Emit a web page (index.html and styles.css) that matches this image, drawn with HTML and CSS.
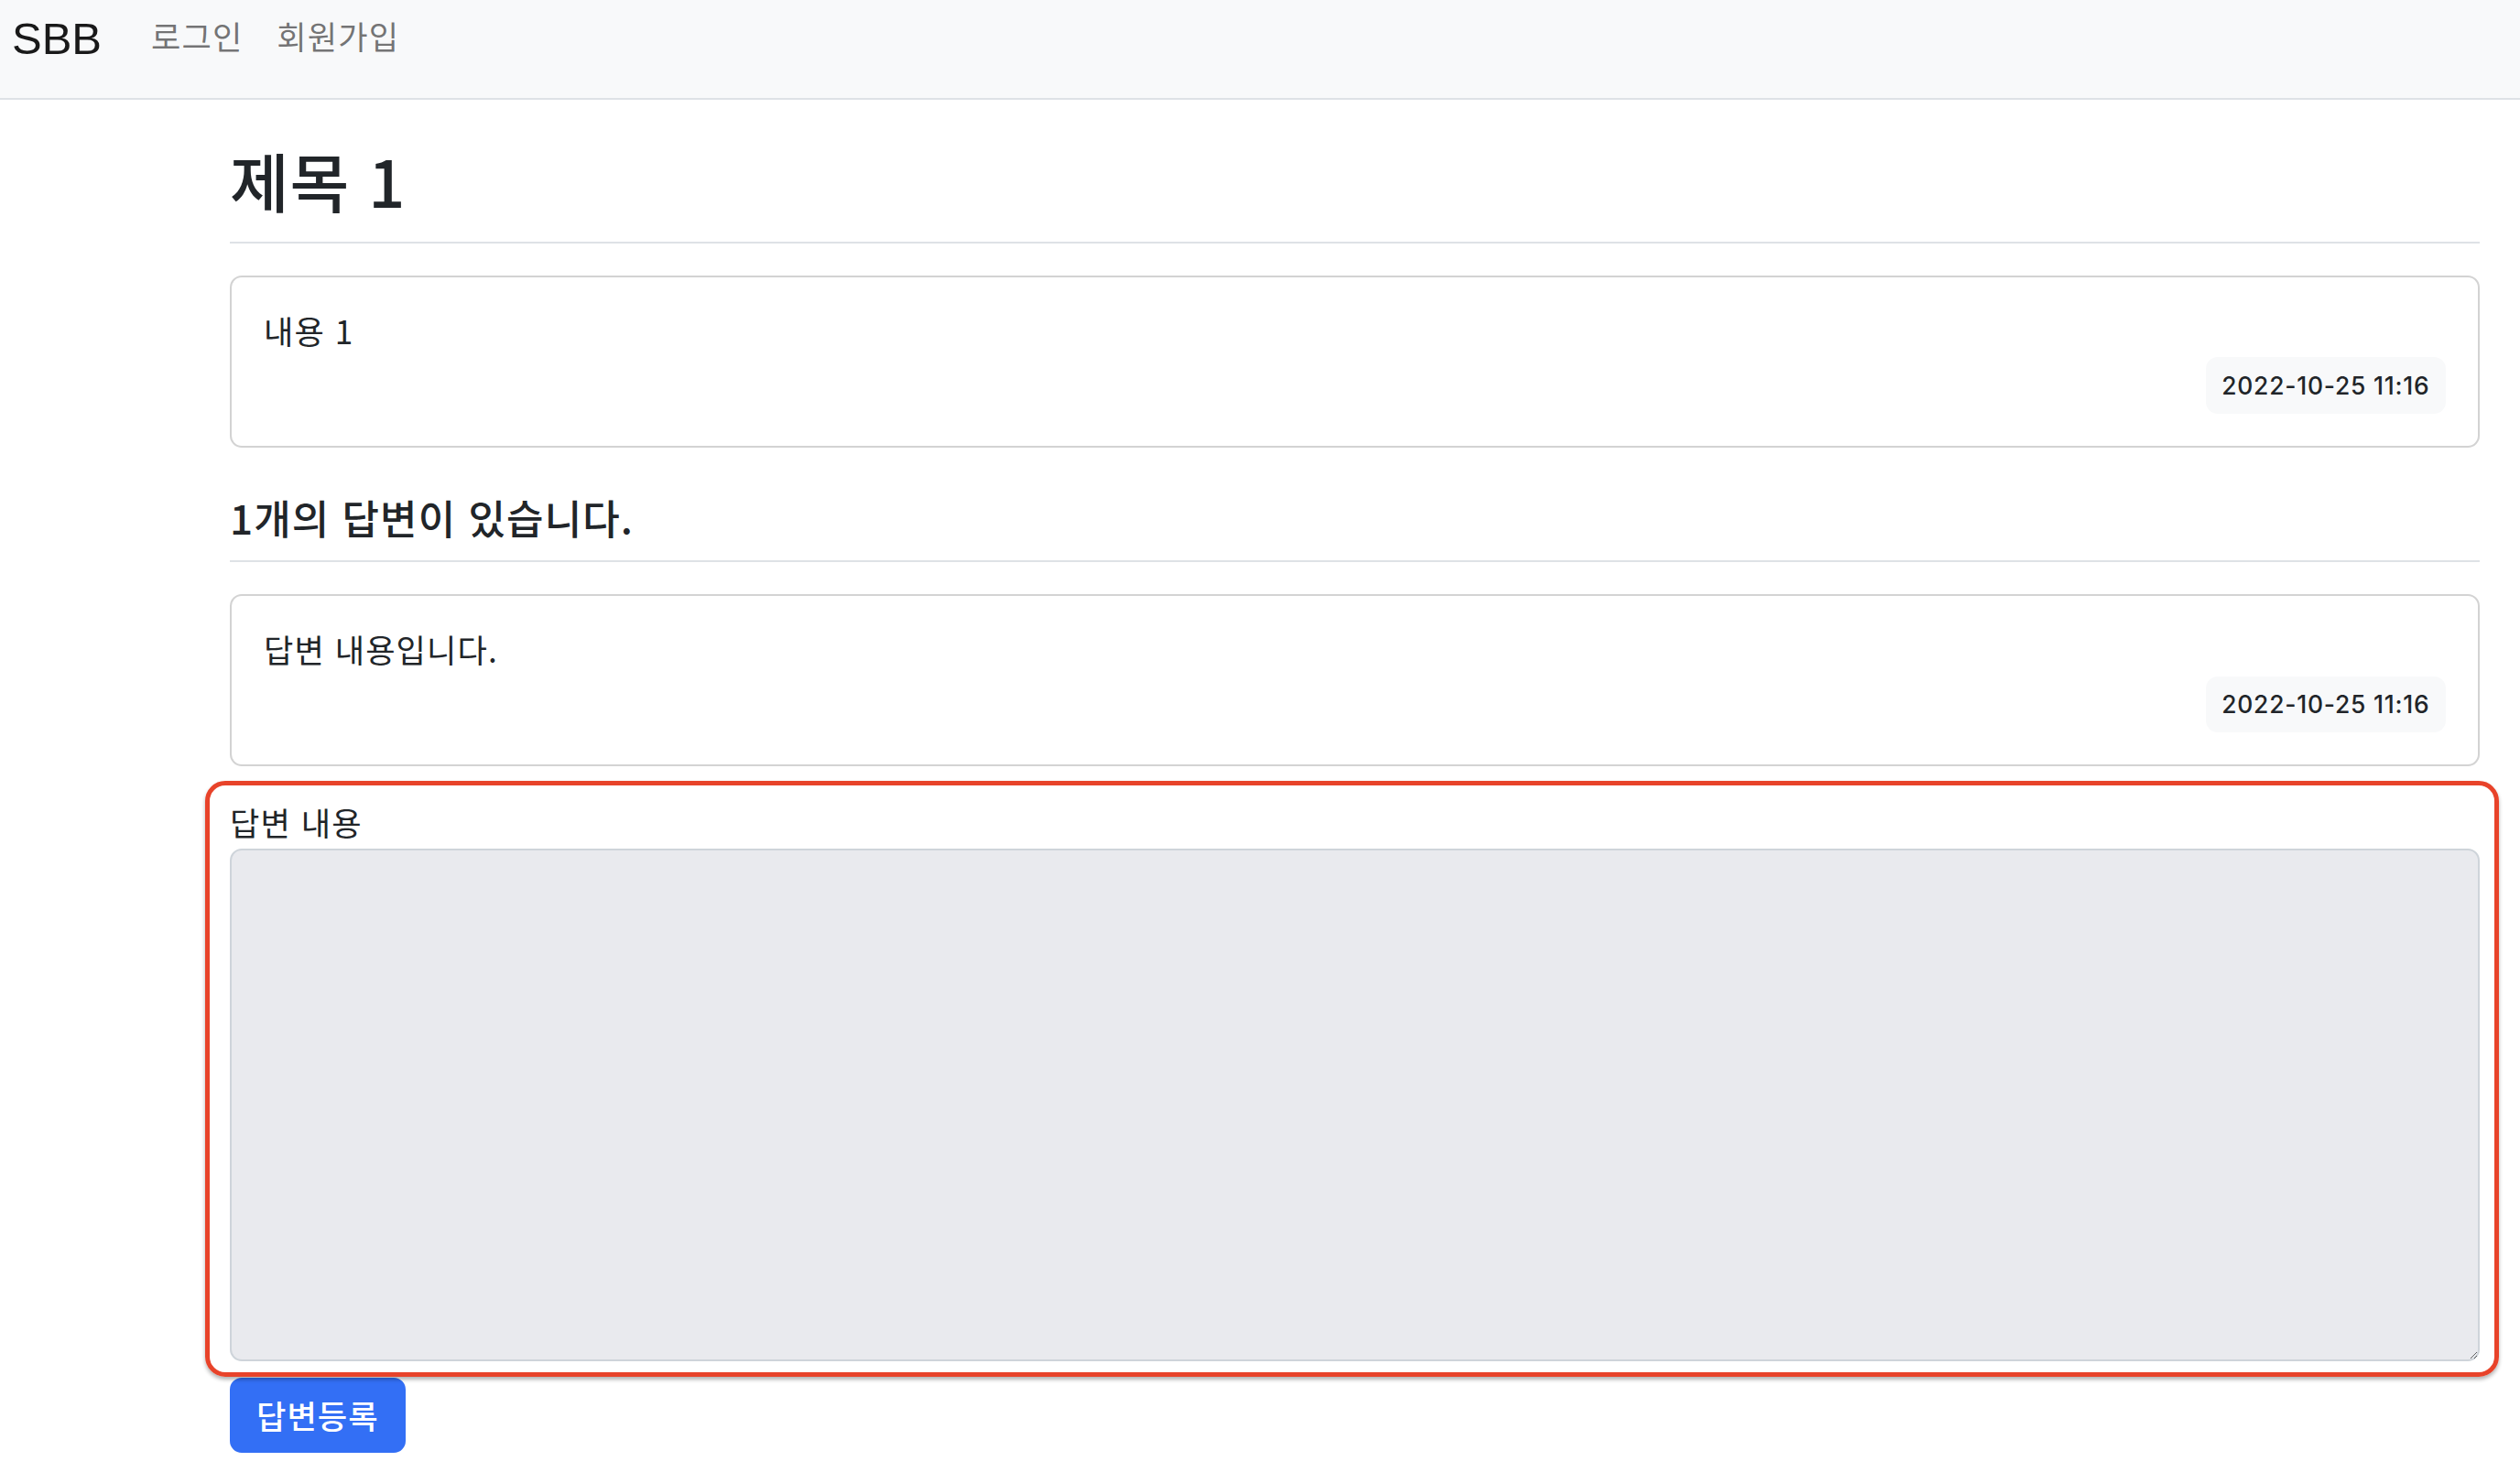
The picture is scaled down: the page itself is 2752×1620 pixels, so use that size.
FILE: index.html
```html
<!DOCTYPE html>
<html lang="ko">
<head>
<meta charset="utf-8">
<title>SBB</title>
<link rel="stylesheet" href="styles.css">
</head>
<body>
<nav class="navbar">
  <a class="brand" href="#">SBB</a>
  <ul class="nav-list">
    <li><a class="nav-link" href="#">로그인</a></li>
    <li><a class="nav-link" href="#">회원가입</a></li>
  </ul>
</nav>
<main class="container">
  <h2 class="title">제목 1</h2>
  <div class="card">
    <div class="card-text">내용 1</div>
    <div class="meta">
      <span class="badge">2022-10-25 11:16</span>
    </div>
  </div>
  <h5 class="answer-count">1개의 답변이 있습니다.</h5>
  <div class="card">
    <div class="card-text">답변 내용입니다.</div>
    <div class="meta">
      <span class="badge">2022-10-25 11:16</span>
    </div>
  </div>
  <form class="answer-form">
    <div class="field">
      <label class="form-label" for="content">답변 내용</label>
      <textarea class="form-control" id="content" name="content"></textarea>
    </div>
    <button type="submit" class="btn-primary">답변등록</button>
  </form>
</main>
<div class="highlight"></div>
</body>
</html>
```
FILE: styles.css
```css
* { box-sizing: border-box; }
html, body { margin: 0; padding: 0; }
body {
  font-family: "Noto Sans CJK KR", "Noto Sans", sans-serif;
  font-size: 35.2px;
  line-height: 1.5;
  letter-spacing: 0.03em;
  color: #212529;
  background: #fff;
}
.navbar {
  display: flex;
  align-items: flex-start;
  height: 109px;
  padding: 13px 0 0 13px;
  background: #f8f9fa;
  border-bottom: 2px solid #dee2e6;
}
.brand {
  font-family: "Liberation Sans", Arial, sans-serif;
  font-size: 49px;
  line-height: 1.2;
  letter-spacing: 0;
  color: rgba(0, 0, 0, 0.9);
  text-decoration: none;
  margin-right: 54px;
}
.nav-list {
  display: flex;
  gap: 37px;
  list-style: none;
  margin: 0;
  padding: 0;
}
.nav-link {
  color: rgba(0, 0, 0, 0.55);
  text-decoration: none;
  font-size: 35.2px;
  line-height: 1.5;
}
.container {
  margin: 35px 44px 35px 251px;
}
.title {
  font-size: 70.4px;
  font-weight: 500;
  line-height: 1.2;
  letter-spacing: 0.01em;
  margin: 0 0 17.6px;
  padding: 9.6px 0 25.6px;
  border-bottom: 2px solid #dee2e6;
}
.card {
  border: 2px solid #d3d3d3;
  border-radius: 13px;
  padding: 35px;
  margin: 35px 0;
}
.card-text {
  white-space: pre-line;
  position: relative;
  top: -3px;
}
.meta {
  display: flex;
  justify-content: flex-end;
}
.badge {
  display: inline-block;
  font-family: Inter, "Noto Sans CJK KR", sans-serif;
  font-size: 26.4px;
  font-weight: 500;
  line-height: 1;
  letter-spacing: 0.03em;
  padding: 17.6px;
  background: #f8f9fa;
  color: #212529;
  border-radius: 13px;
}
.answer-count {
  font-size: 44px;
  font-weight: 500;
  line-height: 1.2;
  margin: 35px 0;
  padding: 14.6px 0 20.6px;
  border-bottom: 2px solid #dee2e6;
}
.answer-form { margin: 35px 0; }
.field { margin-bottom: 18px; }
.form-label {
  display: block;
  margin-bottom: 2px;
}
.form-control {
  display: block;
  width: 100%;
  height: 560px;
  background: #e9eaee;
  border: 2px solid #ced4da;
  border-radius: 13px;
  font: inherit;
  padding: 13px 26px;
}
.btn-primary {
  font: inherit;
  font-weight: 500;
  line-height: 1.5;
  letter-spacing: 0.03em;
  color: #fff;
  background: #336ff5;
  border: 2px solid #336ff5;
  border-radius: 13px;
  padding: 12.6px 27px;
}
.highlight {
  position: absolute;
  left: 224px;
  top: 853px;
  width: 2505px;
  height: 651px;
  border: 5px solid #e8432a;
  border-radius: 22px;
  box-shadow: 0 3px 4px rgba(0, 0, 0, 0.3);
  pointer-events: none;
}
```
